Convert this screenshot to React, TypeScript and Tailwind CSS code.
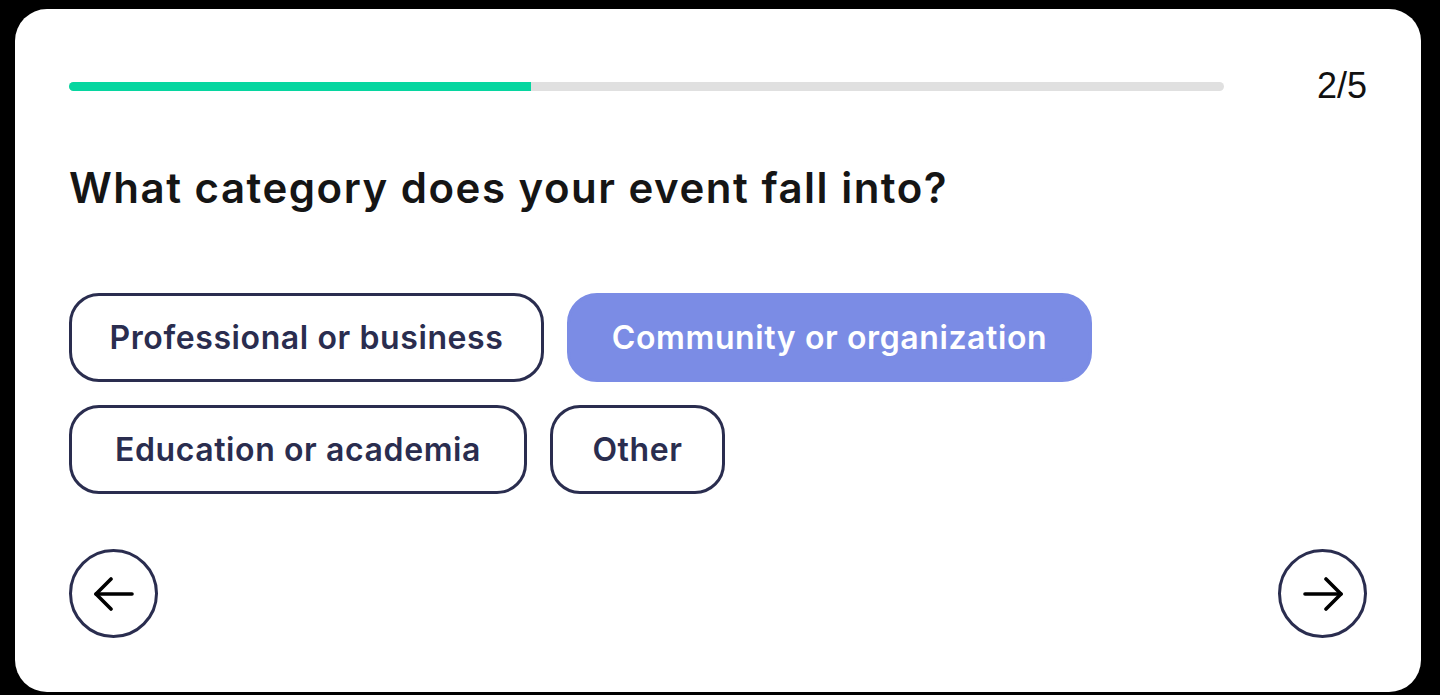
import { useState } from "react";

const options = [
  { label: "Professional or business", width: "w-[475px]" },
  { label: "Community or organization", width: "w-[525px]" },
  { label: "Education or academia", width: "w-[458px]" },
  { label: "Other", width: "w-[175px]" },
];

function Arrow({ dir }: { dir: "left" | "right" }) {
  return (
    <svg
      width="42"
      height="34"
      viewBox="0 0 42 34"
      fill="none"
      stroke="#000"
      strokeWidth="3.6"
      strokeLinecap="round"
      strokeLinejoin="round"
      className={dir === "right" ? "rotate-180" : ""}
    >
      <path d="M39 17H3" />
      <path d="M18 2 3 17l15 15" />
    </svg>
  );
}

export default function App() {
  const [selected, setSelected] = useState("Community or organization");
  const step = 2;
  const total = 5;

  return (
    <div className="h-[695px] bg-black pt-[9px] pl-[15px]">
      <div
        className="w-[1406px] h-[683px] bg-white rounded-[32px] px-[54px] pt-[53px] pb-[54px] flex flex-col"
        style={{ fontFamily: "Inter, 'Noto Sans', sans-serif" }}
      >
        <div className="flex items-center h-[48px]">
          <div className="w-[1155px] h-[9px] rounded-full bg-[#e0e0e0] overflow-hidden">
            <div className="h-full bg-[#06d6a0]" style={{ width: `${(step / total) * 100}%` }} />
          </div>
          <div
            className="ml-auto text-[36px] text-[#111] leading-none"
            style={{ fontFamily: "'Liberation Sans', Arial, sans-serif" }}
          >
            {step}/{total}
          </div>
        </div>

        <h1 className="mt-[53px] text-[42px] leading-[50px] font-semibold text-[#151515] tracking-[1.5px]">
          What category does your event fall into?
        </h1>

        <div className="mt-[80px] flex flex-wrap gap-[23px] w-[1100px]">
          {options.map((o) => {
            const active = o.label === selected;
            return (
              <button
                key={o.label}
                onClick={() => setSelected(o.label)}
                className={
                  active
                    ? `${o.width} h-[89px] rounded-[30px] border-[3px] border-[#7b8ce5] bg-[#7b8ce5] text-white text-[32px] font-semibold tracking-[0.6px]`
                    : `${o.width} h-[89px] rounded-[30px] border-[3px] border-[#2a2d4f] bg-white text-[#2a2d4f] text-[32px] font-semibold tracking-[0.6px]`
                }
              >
                {o.label}
              </button>
            );
          })}
        </div>

        <div className="mt-auto flex justify-between">
          <button className="w-[89px] h-[89px] rounded-full border-[3px] border-[#2a2d4f] flex items-center justify-center">
            <Arrow dir="left" />
          </button>
          <button className="w-[89px] h-[89px] rounded-full border-[3px] border-[#2a2d4f] flex items-center justify-center">
            <Arrow dir="right" />
          </button>
        </div>
      </div>
    </div>
  );
}
